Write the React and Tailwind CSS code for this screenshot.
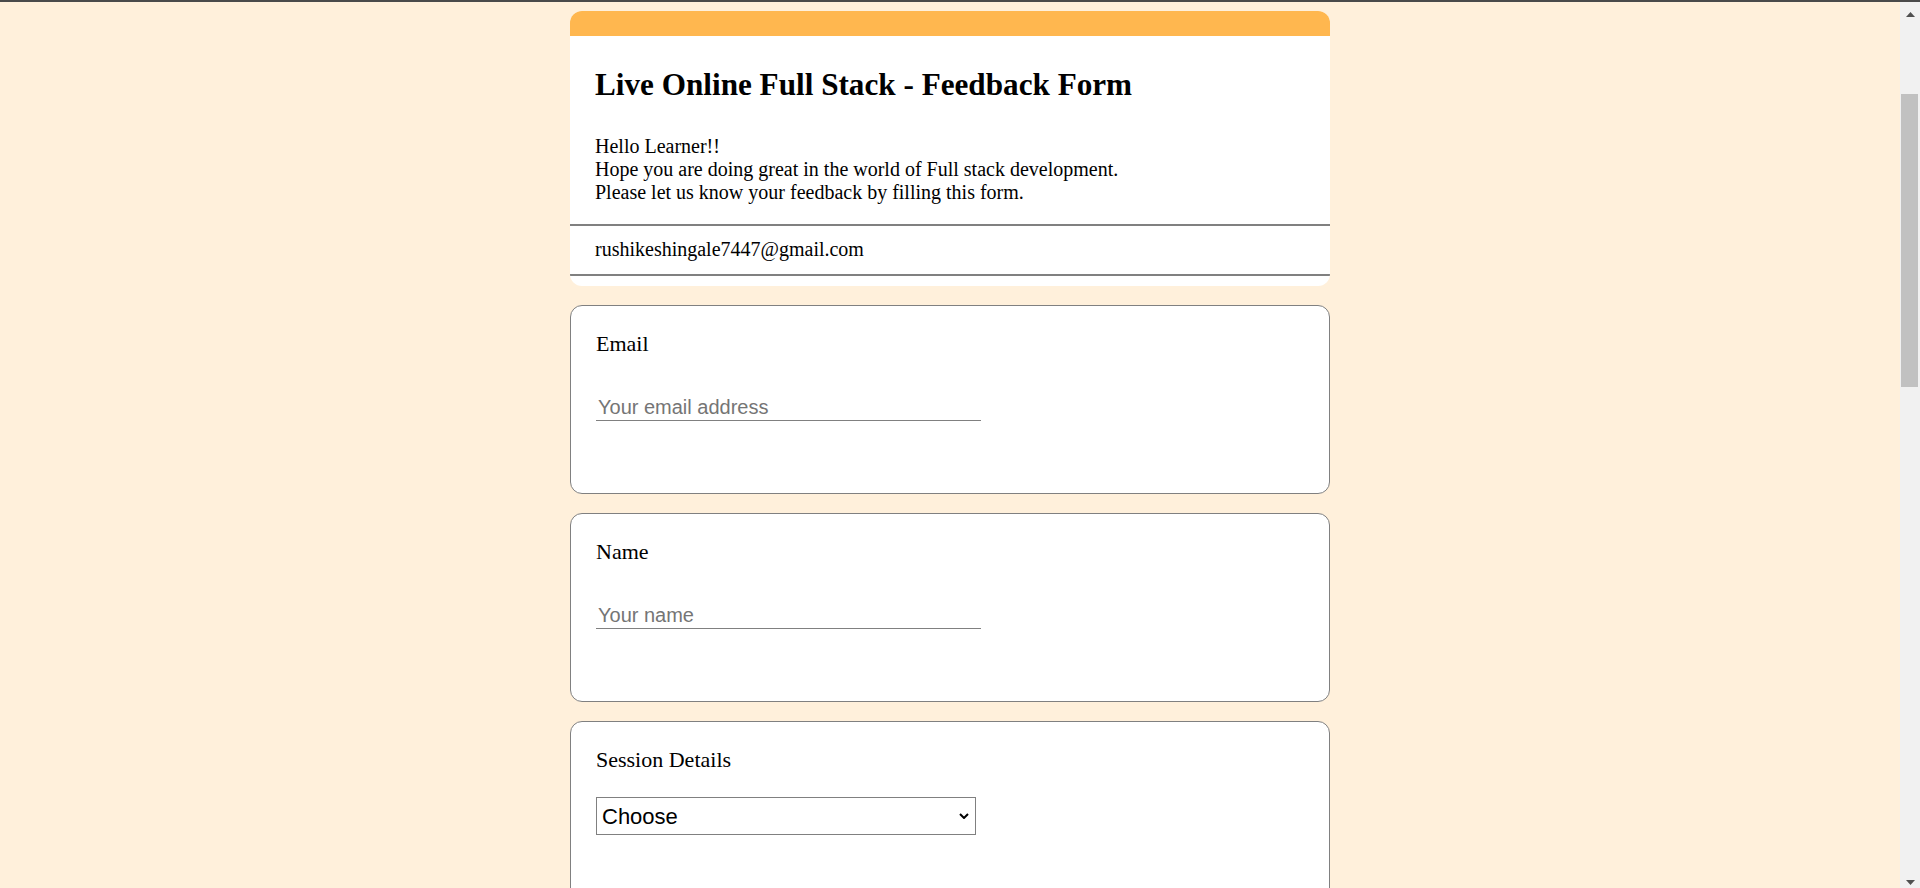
import React from "react";

function Scrollbar() {
  return (
    <div className="w-[20px] shrink-0 bg-[#f1f1f1] flex flex-col">
      <div className="h-[24px] flex items-center justify-center">
        <svg width="9" height="5" viewBox="0 0 9 5">
          <polygon points="4.5,0 9,5 0,5" fill="#505050" />
        </svg>
      </div>
      <div className="flex-1 min-h-0 pt-[68px]">
        <div className="h-[293px] ml-[1px] mr-[2px] bg-[#c1c1c1]" />
      </div>
      <div className="h-[12px] flex items-center justify-center">
        <svg width="9" height="5" viewBox="0 0 9 5">
          <polygon points="0,0 9,0 4.5,5" fill="#505050" />
        </svg>
      </div>
    </div>
  );
}

function TextCard({ label, placeholder }) {
  return (
    <div className="h-[189px] shrink-0 bg-white border border-[#808080] rounded-[12px] px-[25px] pt-[25px]">
      <div className="text-[22px] leading-[25px] text-black">{label}</div>
      <input
        type="text"
        placeholder={placeholder}
        className="mt-[38px] block h-[27px] w-[385px] border-0 border-b border-[#808080] px-[2px] py-0 text-[20px] text-black placeholder:text-[#757575] outline-none bg-transparent"
        style={{ fontFamily: '"Liberation Sans", Arial, sans-serif' }}
      />
    </div>
  );
}

export default function App() {
  return (
    <div
      className="h-[888px] w-full overflow-hidden flex flex-col bg-[#fff0db] text-black"
      style={{ fontFamily: '"Liberation Serif", "Times New Roman", serif' }}
    >
      <div className="h-[2px] shrink-0 bg-[#4a4a4a]" />
      <div className="flex flex-1 min-h-0">
        <main className="flex-1 min-w-0 overflow-hidden pt-[9px]">
          <div className="mx-auto w-[760px] flex flex-col gap-[19px]">
            <div className="shrink-0 bg-white rounded-[12px] overflow-hidden">
              <div className="h-[25px] bg-[#ffb74f]" />
              <div className="px-[25px] pt-[31px]">
                <h2 className="text-[31.2px] leading-[36px] font-bold">
                  Live Online Full Stack - Feedback Form
                </h2>
                <div className="mt-[32px] text-[20px] leading-[23px]">
                  <div>Hello Learner!!</div>
                  <div>Hope you are doing great in the world of Full stack development.</div>
                  <div>Please let us know your feedback by filling this form.</div>
                </div>
              </div>
              <div className="mt-[20px] h-[2px] bg-[#808080]" />
              <div className="px-[25px] pt-[12px] pb-[13px] text-[20px] leading-[23px]">
                rushikeshingale7447@gmail.com
              </div>
              <div className="h-[2px] bg-[#808080]" />
              <div className="h-[10px]" />
            </div>

            <TextCard label="Email" placeholder="Your email address" />
            <TextCard label="Name" placeholder="Your name" />

            <div className="h-[189px] shrink-0 bg-white border border-[#808080] rounded-[12px] px-[25px] pt-[25px]">
              <div className="text-[22px] leading-[25px]">Session Details</div>
              <div className="relative mt-[25px] w-[380px]">
                <select
                  defaultValue="choose"
                  className="block appearance-none h-[38px] w-[380px] border border-[#808080] bg-white pl-[5px] pr-[24px] text-[22px] text-black outline-none rounded-none"
                  style={{ fontFamily: '"Liberation Sans", Arial, sans-serif' }}
                >
                  <option value="choose">Choose</option>
                </select>
                <svg
                  className="pointer-events-none absolute right-[7px] top-[16px]"
                  width="10"
                  height="6"
                  viewBox="0 0 10 6"
                >
                  <polyline points="1,1 5,5 9,1" fill="none" stroke="#000" strokeWidth="2" />
                </svg>
              </div>
            </div>
          </div>
        </main>
        <Scrollbar />
      </div>
    </div>
  );
}
